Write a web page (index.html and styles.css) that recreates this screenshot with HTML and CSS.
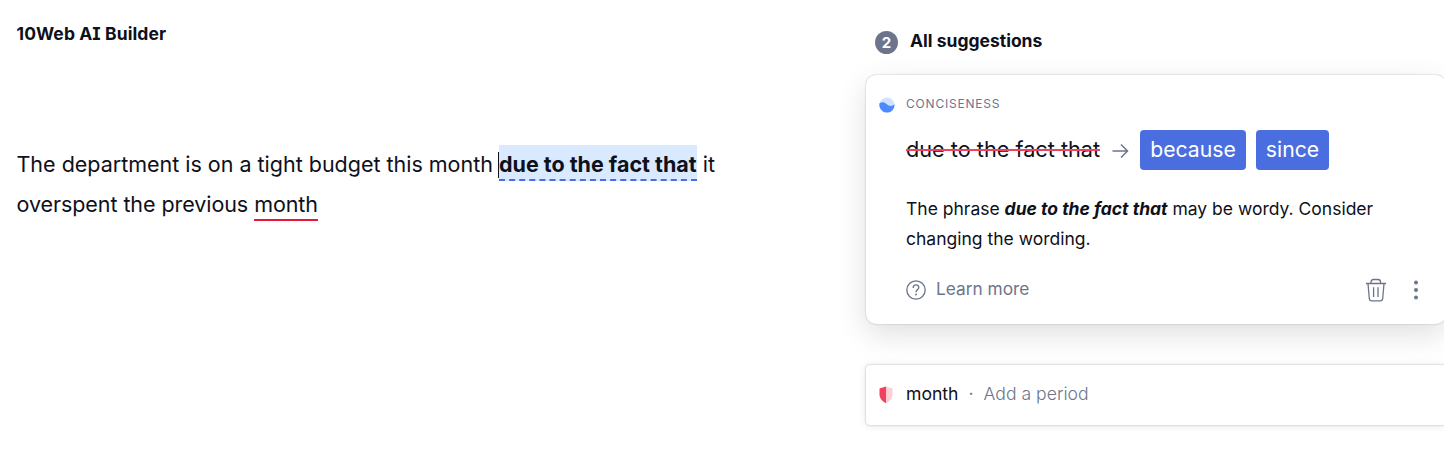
FILE: index.html
```html
<!DOCTYPE html>
<html lang="en">
<head>
<meta charset="utf-8">
<title>10Web AI Builder</title>
<link rel="stylesheet" href="styles.css">
</head>
<body>
<div class="app">
  <main class="editor">
    <h1 class="doc-title">10Web A<span class="serif-i">I</span> Builder</h1>
    <p class="doc-text"><span class="line-one">The department is on a tight budget this month <mark class="highlight">due to the fact that</mark> it</span><br><span class="line-two">overspent the previous <span class="error">month</span></span></p>
  </main>
  <aside class="panel">
    <header class="panel-head">
      <span class="count">2</span>
      <h2 class="panel-title">All suggestions</h2>
    </header>
    <section class="card">
      <div class="category">
        <svg class="wave" width="16" height="16" viewBox="0 0 16 16"><circle cx="8" cy="8" r="7.6" fill="#d0e2ff"/><path d="M.5 6.3C3 4.5 5.300 5.100 7.500 7C10 9.200 12.500 9.600 15.500 7.500A7.600 7.600 0 1 1 .5 6.300Z" fill="#4e8aff"/></svg>
        <span class="category-name">CONCISENESS</span>
      </div>
      <div class="replace">
        <span class="old">due to the fact that</span>
        <svg class="arrow" width="17" height="16" viewBox="0 0 17 16" fill="none" stroke="#6d758d" stroke-width="1.500"><path d="M.5 8H15.500M9 1.500L15.500 8L9 14.500"/></svg>
        <button class="option because">because</button>
        <button class="option since">since</button>
      </div>
      <p class="explain"><span class="explain-one">The phrase <b>due to the fact that</b> may be wordy. Consider</span><br><span class="explain-two">changing the wording.</span></p>
      <footer class="actions">
        <svg width="20" height="20" viewBox="0 0 20 20" fill="none" stroke="#6d758d" stroke-width="1.300"><circle cx="10" cy="10" r="9.200"/><path d="M7.200 7.900C7.200 6 8.400 4.900 10 4.900S12.800 6 12.800 7.600C12.800 9.700 10 9.600 10 12.200"/><circle cx="10" cy="14.500" r=".95" fill="#6d758d" stroke="none"/></svg>
        <span class="learn">Learn more</span>
        <svg class="trash" width="22" height="24" viewBox="0 0 22 24" fill="none" stroke="#6d758d" stroke-width="1.300"><path d="M1 5.500H21M6 5.200V4Q6 1.500 8.500 1.500H13Q15.500 1.500 15.500 4V5.200M3 5.500L4.300 20.500Q4.500 22.800 6.700 22.800H15.300Q17.500 22.800 17.700 20.500L19 5.500M8.600 9.200V19M13 9.200V19"/></svg>
        <svg class="more" width="6" height="22" viewBox="0 0 6 22" fill="#6d758d"><circle cx="3" cy="3.500" r="2"/><circle cx="3" cy="11" r="2"/><circle cx="3" cy="18.500" r="2"/></svg>
      </footer>
    </section>
    <section class="card-small">
      <svg width="14" height="18" viewBox="0 0 14 18"><path d="M7 .5L.5 2.500V8.500C.5 12.500 3.500 15.500 7 17.200Z" fill="#f0415d"/><path d="M7 .5L13.500 2.500V8.500C13.500 12.500 10.500 15.500 7 17.200Z" fill="#ffcdd5"/></svg>
      <span class="word">month</span>
      <span class="dot">·</span>
      <span class="hint">Add a period</span>
    </section>
  </aside>
</div>
</body>
</html>
```
FILE: styles.css
```css
* { box-sizing: border-box; }
body {
  margin: 0;
  background: #fff;
  color: #0e101a;
  font-family: Inter, "Liberation Sans", sans-serif;
  font-weight: 400;
  overflow: hidden;
}
.app { display: flex; height: 476px; }
.editor { flex: 0 0 866px; padding: 22px 0 0 16.500px; }
.doc-title { margin: 0; font-size: 17.500px; line-height: 24px; font-weight: 700; letter-spacing: .08px; }
.serif-i { font-feature-settings: "cv08"; }
.doc-text { margin: 98px 0 0; font-size: 21.500px; line-height: 40px; white-space: nowrap; }
.line-one { letter-spacing: -.01px; }
.line-two { letter-spacing: -.07px; }
.highlight {
  color: inherit;
  font-weight: 700;
  background: #d9e9ff;
  padding: 6px 0 2px;
  border-bottom: 2px dashed #4a6ee0;
  position: relative;
}
.highlight::before {
  content: "";
  position: absolute;
  left: -1px;
  top: 7px;
  width: 1px;
  height: 26px;
  background: #0e101a;
}
.error { padding-bottom: 2px; border-bottom: 2px solid #eb1537; }
.panel { flex: 0 0 580px; padding-top: 29px; }
.panel-head { display: flex; align-items: center; height: 26px; padding-left: 9px; }
.count {
  width: 23px;
  height: 23px;
  border-radius: 50%;
  background: #6d758d;
  color: #fff;
  font-size: 15px;
  line-height: 23px;
  font-weight: 700;
  text-align: center;
}
.panel-title { margin: -2px 0 0 12px; font-size: 17.500px; line-height: 24px; font-weight: 700; }
.card {
  height: 249px;
  margin-top: 20px;
  padding: 19px 24px 0 13px;
  border-radius: 10px;
  background: #fff;
  box-shadow: 0 0 2px rgba(0,0,0,.25), 0 10px 30px rgba(0,0,0,.13);
}
.category { display: flex; align-items: center; height: 20px; }
.wave { margin-top: 2px; }
.category-name { margin-left: 11px; color: #6d758d; font-size: 12px; line-height: 20px; letter-spacing: .8px; }
.replace { display: flex; align-items: center; height: 40px; margin: 16px 0 0 27px; }
.old { position: relative; width: 194px; margin-top: -2px; font-size: 21.700px; line-height: 38px; white-space: nowrap; }
.old::after { content: ""; position: absolute; left: 0; right: 0; top: 19px; height: 2px; background: #f0415d; }
.arrow { margin: 2px 11px 0 12px; }
.option { height: 40px; padding: 0 0 1px; border: 0; border-radius: 4px; background: #4a6ee0; color: #fff; font: 400 21.200px/39px Inter, sans-serif; text-align: center; }
.because { width: 106px; }
.since { width: 73px; margin-left: 10px; }
.explain { margin: 24px 0 0 27px; font-size: 17.500px; line-height: 30px; white-space: nowrap; }
.explain b { font-style: italic; font-weight: 700; }
.actions { display: flex; align-items: center; height: 24px; margin: 24px 0 0 27px; }
.learn { margin: -2px 0 0 10px; color: #6d758d; font-size: 17.300px; line-height: 24px; }
.trash { margin-left: auto; }
.more { margin: 0 3px 0 26px; }
.card-small {
  display: flex;
  align-items: center;
  height: 60px;
  margin-top: 41px;
  padding-left: 13px;
  border-radius: 4px;
  background: #fff;
  box-shadow: 0 0 2px rgba(0,0,0,.3), 0 1px 8px rgba(0,0,0,.1);
  font-size: 17.600px;
  line-height: 24px;
}
.word, .dot, .hint { padding-bottom: 2px; }
.word { margin-left: 13px; }
.dot { margin: 0 10px; color: #6d758d; }
.hint { color: #6d758d; font-weight: 300; }
```
